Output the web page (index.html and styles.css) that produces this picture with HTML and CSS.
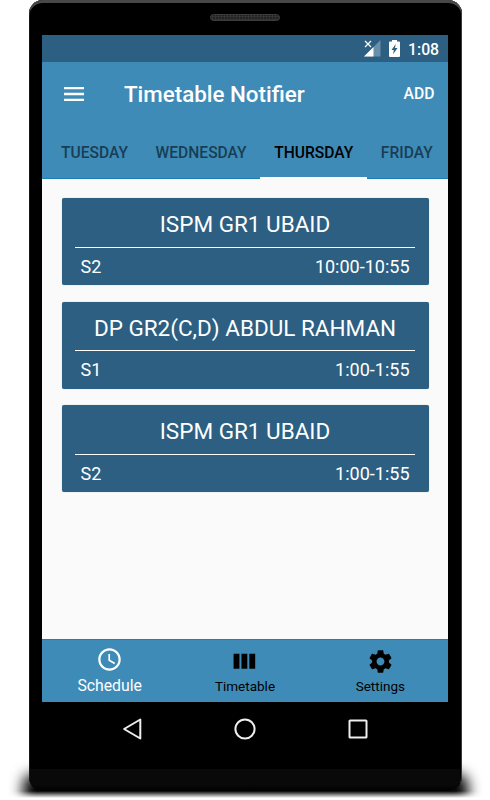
FILE: index.html
```html
<!DOCTYPE html>
<html lang="en">
<head>
<meta charset="utf-8">
<title>Timetable Notifier</title>
<link rel="stylesheet" href="styles.css">
</head>
<body>
<div class="stage">
  <div class="ground"><div class="shadow"></div></div>
  <div class="phone">
    <svg class="speaker" width="70" height="7" viewBox="0 0 70 7">
      <defs><pattern id="mesh" width="3" height="3" patternUnits="userSpaceOnUse"><rect width="3" height="3" fill="#333"/><circle cx="1" cy="1" r=".8" fill="#090909"/></pattern></defs>
      <rect x=".5" y=".5" width="69" height="6" rx="3" fill="url(#mesh)" stroke="#3b3b3b"/>
    </svg>
    <div class="screen">
      <div class="status">
        <svg class="signal" width="17" height="17" viewBox="0 0 17 17">
          <path d="M16.500 0V16.500H0z" fill="#698fab"/>
          <path d="M9.500 7V16.500H0z" fill="#fff"/>
          <path d="M0 0h8v8H0z" fill="#2c5f82"/>
          <path d="M1 1l6 6M7 1L1 7" stroke="#fff" stroke-width="1.200"/>
        </svg>
        <svg class="battery" width="11" height="17" viewBox="0 0 11 17">
          <path d="M3 0h5v1.600h2q1 0 1 1V16q0 1-1 1H1q-1 0-1-1V2.600q0-1 1-1h2z" fill="#fff"/>
          <path d="M6.700 4L2.500 10h2.300l-.7 4.200L8.500 8H6z" fill="#2c5f82"/>
        </svg>
        <span class="time">1:08</span>
      </div>
      <header class="appbar">
        <svg class="menu" width="20" height="14" viewBox="0 0 20 14"><path d="M0 1h20M0 7h20M0 13h20" stroke="#fff" stroke-width="2.300"/></svg>
        <h1>Timetable Notifier</h1>
        <span class="add">ADD</span>
      </header>
      <nav class="tabs">
        <span class="tab">TUESDAY</span>
        <span class="tab">WEDNESDAY</span>
        <span class="tab active">THURSDAY</span>
        <span class="tab">FRIDAY</span>
      </nav>
      <main class="list">
        <article class="card">
          <h2>ISPM GR1 UBAID</h2>
          <div class="row"><span>S2</span><span>10:00-10:55</span></div>
        </article>
        <article class="card">
          <h2>DP GR2(C,D) ABDUL RAHMAN</h2>
          <div class="row"><span>S1</span><span>1:00-1:55</span></div>
        </article>
        <article class="card">
          <h2>ISPM GR1 UBAID</h2>
          <div class="row"><span>S2</span><span>1:00-1:55</span></div>
        </article>
      </main>
      <nav class="bottom">
        <div class="item selected">
          <svg width="27" height="27" viewBox="0 0 24 24" fill="#fff"><path d="M11.990 2C6.470 2 2 6.480 2 12s4.470 10 9.990 10C17.520 22 22 17.520 22 12S17.520 2 11.990 2zM12 20c-4.420 0-8-3.580-8-8s3.580-8 8-8 8 3.580 8 8-3.580 8-8 8z"/><path d="M12.500 7H11v6l5.250 3.150.75-1.230-4.500-2.670z"/></svg>
          <span>Schedule</span>
        </div>
        <div class="item">
          <svg width="27" height="27" viewBox="0 0 24 24"><path d="M9.300 18.500h5.200V5H9.300v13.500zM2.300 18.500h5.200V5H2.300v13.500zM16.300 5v13.500h5.200V5h-5.200z"/></svg>
          <span>Timetable</span>
        </div>
        <div class="item">
          <svg width="27" height="27" viewBox="0 0 24 24"><path d="M19.430 12.980c.04-.32.070-.64.070-.98s-.03-.66-.07-.98l2.110-1.650c.19-.15.240-.42.120-.64l-2-3.460c-.12-.22-.39-.3-.61-.22l-2.490 1c-.52-.4-1.080-.73-1.690-.98l-.38-2.650C14.460 2.180 14.250 2 14 2h-4c-.25 0-.46.180-.49.420l-.38 2.650c-.61.250-1.170.590-1.690.980l-2.490-1c-.23-.09-.49 0-.61.220l-2 3.460c-.13.220-.07.490.120.640l2.110 1.650c-.04.320-.07.650-.07.980s.03.660.070.980l-2.110 1.650c-.19.150-.24.420-.12.640l2 3.460c.12.220.39.300.61.220l2.490-1c.52.400 1.080.730 1.690.980l.38 2.650c.03.240.24.420.49.420h4c.25 0 .46-.18.490-.42l.38-2.650c.61-.25 1.170-.59 1.690-.98l2.490 1c.23.090.49 0 .61-.22l2-3.460c.12-.22.070-.49-.12-.64l-2.110-1.650zM12 15.500c-1.930 0-3.500-1.570-3.500-3.500s1.570-3.500 3.500-3.500 3.500 1.570 3.500 3.500-1.570 3.500-3.500 3.500z"/></svg>
          <span>Settings</span>
        </div>
      </nav>
    </div>
    <div class="keys">
      <svg width="22" height="24" viewBox="0 0 22 24"><path d="M19.300 2.500V21.500L3.100 12z"/></svg>
      <svg width="22" height="24" viewBox="0 0 22 24"><circle cx="11" cy="12" r="9.600"/></svg>
      <svg width="22" height="24" viewBox="0 0 22 24"><rect x="2.500" y="3.500" width="17" height="17" rx=".6"/></svg>
    </div>
    <div class="chin"></div>
  </div>
</div>
</body>
</html>
```
FILE: styles.css
```css
* { box-sizing: border-box; margin: 0; }
body { background: #fff; font-family: Roboto, "Liberation Sans", sans-serif; overflow: hidden; }
.stage { position: relative; width: 490px; height: 800px; overflow: hidden; padding-left: 29px; }
.ground { position: absolute; left: 0; top: 740px; width: 490px; height: 58px; overflow: hidden; -webkit-mask-image: linear-gradient(#000 51px, transparent 58px); mask-image: linear-gradient(#000 51px, transparent 58px); }
.shadow { position: absolute; left: 23px; top: 34px; width: 445px; height: 50px; border-radius: 10px; background: #000; filter: blur(7px); }
.phone {
  position: relative; display: flex; flex-direction: column; width: 433px; height: 791px;
  padding: 0 14px 0 13px; background: #000; border-radius: 14px; overflow: hidden;
  box-shadow: inset 0 3px 0 #484848, inset -1px 0 0 #3a3a3a, inset 1px 0 0 #191919;
}
.speaker { display: block; flex: none; margin: 14px auto 14px 168px; }
.screen { display: flex; flex-direction: column; flex: none; width: 406px; height: 667px; background: #fafafa; }
.status { display: flex; align-items: center; height: 27px; padding-left: 321.500px; background: #2c5f82; color: #fff; }
.battery { margin-left: 8.500px; }
.time { margin-left: 8px; padding-top: 1px; font-size: 15.800px; font-weight: 500; line-height: 27px; }
.appbar { display: flex; align-items: center; height: 63px; padding: 0 13.500px 0 22px; background: #3e8bb7; color: #fff; }
.appbar h1 { margin-left: 40px; font-size: 22.350px; font-weight: 500; line-height: 26px; white-space: nowrap; }
.add { margin-left: auto; font-size: 15.700px; font-weight: 500; }
.tabs { display: flex; height: 54px; padding-left: 5.200px; background: #3e8bb7; border-bottom: 1px solid #1b80b4; }
.tab { padding: 0 13.800px; height: 54px; font-size: 15.600px; font-weight: 500; line-height: 56px; color: #183e55; }
.tab.active { color: #000; border-bottom: 2px solid #fff; }
.list { display: flex; flex: 1; flex-direction: column; gap: 16.500px; padding: 19.400px 19.500px 0; }
.card { height: 87px; padding: 0 13.500px; background: #2c5f82; border-radius: 2px; color: #fff; box-shadow: 0 0 1px #8fa9bb; }
.card h2 { height: 49.500px; padding-top: 13px; border-bottom: 1px solid #fff; font-size: 22.500px; font-weight: 400; line-height: 26px; text-align: center; white-space: nowrap; }
.row { display: flex; justify-content: space-between; padding: 8px 5.500px 0; font-size: 18px; line-height: 21px; }
.bottom { display: flex; height: 63px; background: #3e8bb7; border-top: 1px solid #1b80b4; }
.item { display: flex; flex: 1; flex-direction: column; align-items: center; padding-top: 8px; font-size: 13.500px; line-height: 16px; color: #000; }
.item span { margin-top: 3px; }
.item.selected { padding-top: 6px; font-size: 15.800px; line-height: 18px; color: #fff; }
.item.selected span { margin-top: 4px; }
.keys { display: flex; justify-content: space-between; padding: 15px 79px 0 79px; }
.keys svg { fill: none; stroke: #eee; stroke-width: 2; stroke-linejoin: round; }
.chin { height: 22px; margin: auto -12px 0; background: linear-gradient(#090909 70%, #000); flex: none; }
```
